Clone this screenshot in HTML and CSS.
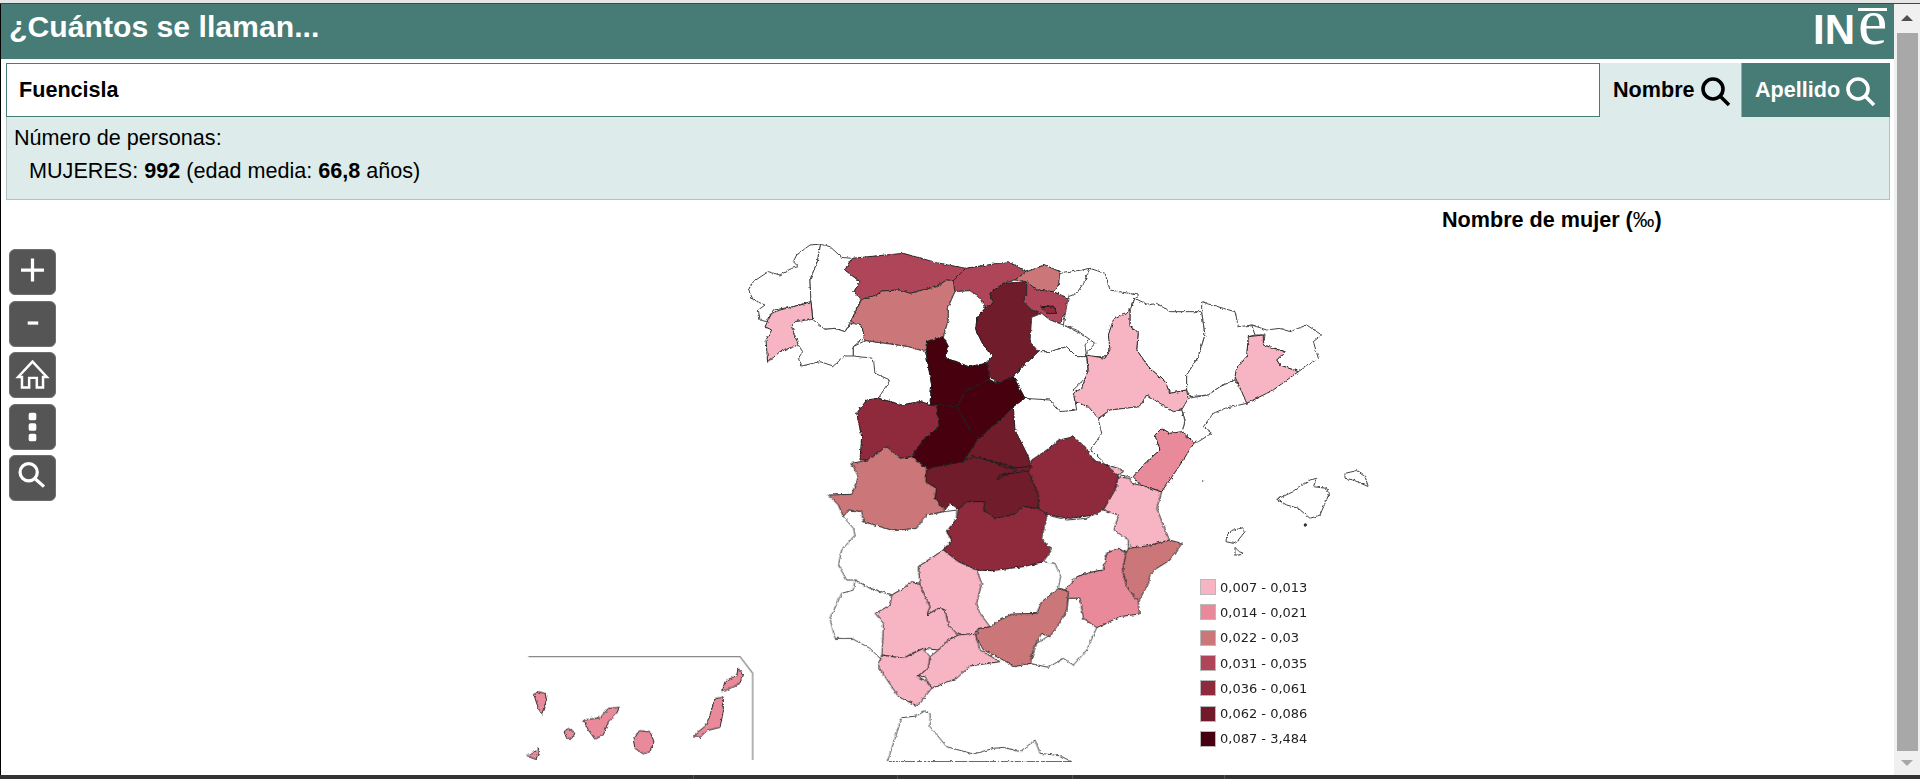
FILE: index.html
```html
<!DOCTYPE html>
<html lang="es">
<head>
<meta charset="utf-8">
<title>¿Cuántos se llaman...</title>
<link rel="stylesheet" href="styles.css">
</head>
<body>
<div class="top-strip"></div>
<div class="window">
  <main class="main">
    <header class="header">
      <h1 class="title">¿Cuántos se llaman...</h1>
      <div class="logo"><span class="logo-in">IN</span><span class="logo-e">e</span></div>
    </header>
    <div class="search">
      <input class="search-input" type="text" value="Fuencisla">
      <button class="tab tab-on">Nombre
        <svg class="tab-icon" viewBox="0 0 30 30"><circle cx="12" cy="12" r="10"/><line x1="19" y1="19" x2="28" y2="28"/></svg>
      </button>
      <button class="tab tab-off">Apellido
        <svg class="tab-icon" viewBox="0 0 30 30"><circle cx="12" cy="12" r="10"/><line x1="19" y1="19" x2="28" y2="28"/></svg>
      </button>
    </div>
    <section class="info">
      <p class="info-line">Número de personas:</p>
      <p class="info-line info-sub">MUJERES: <b>992</b> (edad media: <b>66,8</b> años)</p>
    </section>
    <section class="map-area">
      <svg class="map" viewBox="1 200 1893 575">
        <defs>
          <filter id="rough" x="0" y="0" width="100%" height="100%" filterUnits="objectBoundingBox">
            <feTurbulence type="fractalNoise" baseFrequency="0.28" numOctaves="2" seed="4" result="n"/>
            <feDisplacementMap in="SourceGraphic" in2="n" scale="3.2" xChannelSelector="R" yChannelSelector="G"/>
          </filter>
        </defs>
        <g filter="url(#rough)">
        <g transform="translate(730 230) scale(.33333)">
          <polygon class="w" points="55,180 70,155 115,125 150,135 185,115 205,110 190,95 200,75 240,45 272,42 262,95 240,150 243,215 190,230 130,240 110,275 90,270 85,240 105,225 70,210"/>
          <polygon class="w" points="272,42 300,50 335,82 365,85 345,120 390,155 372,185 392,210 362,275 345,305 315,295 285,298 245,280 248,262 243,215 240,150 262,95"/>
          <polygon class="c1" points="243,215 248,265 195,275 185,290 205,345 150,365 113,397 108,330 125,300 105,290 125,250 150,240 190,230"/>
          <polygon class="w" points="248,268 285,298 315,295 345,305 362,280 395,285 405,320 370,350 370,378 345,378 310,408 270,395 215,408 205,385 218,365 205,345 185,290 195,275"/>
          <polygon class="c4" points="365,85 520,70 620,98 707,115 670,152 650,150 620,170 540,190 510,180 455,183 440,195 395,208 372,185 390,155 345,120"/>
          <polygon class="c4" points="707,115 805,100 835,95 890,125 855,150 820,160 780,190 790,220 765,230 750,205 720,182 672,185 662,155 670,152"/>
          <polygon class="c3" points="395,208 440,195 455,183 510,180 540,190 620,170 650,150 670,152 675,185 655,230 655,270 640,320 590,335 585,365 535,350 405,332 395,285 362,275"/>
          <polygon class="w" points="675,185 720,182 750,205 765,235 740,265 738,300 760,345 790,378 770,395 745,410 715,410 680,395 645,385 655,350 640,320 655,270 655,230"/>
          <polygon class="c6" points="780,190 820,160 890,155 890,195 880,215 905,240 935,250 905,262 900,335 925,365 880,405 850,440 805,460 780,440 770,400 790,378 760,345 738,300 740,265 765,235 790,220"/>
          <polygon class="c3" points="855,150 890,125 945,105 990,125 985,170 970,185 920,180 890,155"/>
          <polygon class="w" points="990,125 1000,130 1080,115 1085,115 1060,170 1035,195 1015,205 970,185 985,170"/>
          <polygon class="c4" points="890,155 920,180 970,185 1015,205 1005,250 990,280 960,270 935,250 905,240 880,215 890,195"/>
          <polygon class="c5" points="935,230 970,228 980,250 950,250"/>
          <polygon class="w" points="905,262 935,250 960,270 1000,285 1080,325 1065,345 1070,380 1040,380 1010,350 960,365 930,370 900,335"/>
          <polygon class="w" points="405,332 535,350 585,365 590,380 605,465 600,525 570,515 515,525 445,505 480,450 435,430 430,385 370,378 370,350"/>
          <polygon class="c5" points="445,505 515,525 570,515 625,530 628,590 580,630 545,680 510,685 470,650 415,690 390,690 395,620 380,550 410,510"/>
          <polygon class="w" points="850,440 925,365 960,365 1010,350 1040,380 1070,380 1075,435 1030,480 1040,540 990,545 960,510 885,505"/>
          <polygon class="c7" points="590,335 640,320 655,350 645,385 680,395 715,410 770,400 780,450 710,480 680,530 640,530 620,525 600,525 605,465 590,380"/>
          <polygon class="c7" points="780,450 805,460 850,440 885,505 850,530 800,580 745,625 720,600 680,530 710,480"/>
          <polygon class="c6" points="850,530 855,600 895,680 905,710 830,715 790,695 730,680 700,695 745,625 800,580"/>
          <polygon class="c7" points="620,525 680,530 720,600 745,625 700,695 620,720 590,715 560,700 545,680 580,630 628,590"/>
        </g>
        <g transform="translate(1060 260) scale(.33333)">
          <polygon class="w" points="90,25 135,40 150,90 235,105 215,130 210,200 225,250 150,290 80,290 75,285 105,250 50,210 10,195 25,110 50,100 70,70"/>
          <polygon class="w" points="225,115 265,135 290,130 330,155 425,155 435,225 415,290 380,345 380,390 330,400 315,365 265,320 230,270 235,215 210,200 210,150"/>
          <polygon class="c1" points="210,150 210,200 235,215 230,270 265,320 315,365 330,400 380,390 385,420 365,450 340,455 300,430 260,405 240,440 150,450 115,475 85,440 45,425 40,400 65,385 85,330 80,285 135,295 150,270 145,225 160,180"/>
          <polygon class="w" points="425,125 490,145 525,155 535,200 580,195 585,225 565,230 560,290 530,325 525,360 480,380 445,405 390,410 380,390 380,345 415,290 435,225 425,155"/>
          <polygon class="w" points="575,195 620,210 660,205 690,215 740,195 785,225 760,245 775,295 715,335 660,315 650,300 675,275 610,255 615,225 585,225"/>
          <polygon class="c1" points="565,230 610,225 610,255 675,275 650,300 660,315 715,335 640,390 560,430 545,395 525,350 530,325 560,290"/>
          <polygon class="w" points="525,360 545,395 560,430 495,445 460,460 430,500 455,520 415,545 403,548 365,520 375,480 365,450 385,415 445,405 480,380"/>
          <polygon class="w" points="115,478 150,450 240,440 260,405 300,430 340,455 365,450 375,480 365,520 330,520 305,505 285,525 300,570 260,605 220,650 205,650 180,645 140,615 92,570 125,520"/>
          <polygon class="c2" points="305,505 330,520 365,515 403,548 350,630 305,695 275,685 240,675 220,650 260,605 300,570 285,525"/>
          <polygon class="w" points="650,718 700,695 750,660 770,655 760,680 800,685 808,700 780,765 750,775 715,745 680,735"/>
          <polygon class="w" points="855,640 890,632 915,650 925,680 880,660 855,655"/>
          <circle class="speck" cx="428" cy="663" r="2"/>
        </g>
        <g transform="translate(1200 460) scale(.33333)">
          <polygon class="w" points="80,225 95,212 130,203 135,215 115,240 100,250 78,245"/>
          <polygon class="w" points="105,262 118,275 130,280 120,285 105,285"/>
          <circle class="speck" cx="316" cy="195" r="5"/>
        </g>
        <g transform="translate(810 460) scale(.33333)">
          <polygon class="c1" points="890,15 925,25 940,35 925,45 895,35"/>
          <polygon class="c1" points="920,50 960,55 965,70 990,75 1055,95 1040,145 1078,240 1010,258 1000,272 965,262 912,210 925,165 880,150 885,115 920,80"/>
          <polygon class="c5" points="665,0 710,-30 750,-60 790,-70 825,-40 850,0 890,15 925,48 915,90 880,150 850,165 780,175 712,165 685,145 685,105 655,32"/>
          <polygon class="c3" points="125,10 175,0 230,-40 270,-5 305,-10 350,25 348,65 380,85 375,115 405,155 350,165 320,205 250,212 160,185 155,155 115,150 100,170 85,135 55,105 125,103 145,50"/>
          <polygon class="w" points="100,170 115,150 155,155 160,185 250,212 320,205 350,165 405,155 440,150 440,175 410,215 425,240 400,270 325,320 330,370 305,365 280,385 245,405 180,385 135,360 110,360 85,315 95,270 135,225 130,205"/>
          <polygon class="c6" points="350,25 460,5 490,-10 550,5 590,25 665,20 655,32 685,105 685,145 640,140 610,165 555,175 520,150 525,125 470,125 445,148 420,128 405,150 375,115 380,85 348,65"/>
          <polyline class="line" points="530,0 590,15 620,30 575,50 560,60 568,45 620,38 655,32"/>
          <polygon class="c5" points="445,148 470,125 525,125 520,150 555,175 610,165 640,140 685,145 712,165 695,235 725,270 700,305 640,320 600,325 545,332 500,330 445,305 400,270 425,240 410,215 440,175"/>
          <polygon class="w" points="712,165 770,180 830,175 880,150 925,165 912,210 955,240 955,280 925,265 890,280 880,330 850,335 800,350 765,390 745,382 752,350 735,310 700,305 725,270 695,235"/>
          <polygon class="c2" points="765,390 800,350 850,335 880,330 890,280 925,265 948,280 938,330 950,380 985,425 988,462 930,470 860,503 820,475 810,415 775,415"/>
          <polygon class="c3" points="955,265 1010,258 1078,240 1116,250 1080,300 1040,325 1020,345 1015,370 985,425 950,380 938,330 948,280"/>
          <polygon class="w" points="775,415 810,415 820,475 860,503 830,570 790,615 760,595 715,622 660,610 680,550 720,525 770,455"/>
          <polygon class="c3" points="745,385 775,395 770,455 720,530 695,520 672,560 660,610 615,620 570,595 520,570 497,530 505,505 540,500 570,480 605,462 680,460 695,425"/>
          <polygon class="c1" points="325,320 400,270 445,305 500,330 515,370 500,430 510,460 540,500 505,505 495,520 450,530 415,495 405,450 385,445 350,465 360,440 330,375"/>
          <polygon class="c1" points="245,405 280,385 305,365 330,375 360,440 350,465 385,445 405,450 415,495 445,525 415,540 385,570 340,565 305,580 280,595 215,585 220,490 195,460 240,435"/>
          <polygon class="w" points="135,360 180,385 245,405 240,435 195,460 220,490 215,600 180,565 125,535 75,535 60,475 95,400 130,390"/>
          <polygon class="c1" points="215,585 280,595 340,565 360,590 355,625 320,650 345,660 365,685 345,710 320,737 265,710 205,620"/>
          <polygon class="c1" points="360,590 385,570 415,540 445,525 495,520 510,570 570,605 480,618 440,655 365,685 345,650 320,650 355,625"/>
          <polygon class="w" points="232,905 275,773 320,768 345,752 360,760 360,800 410,860 490,882 550,865 580,862 630,875 675,840 690,880 750,887 785,905"/>
        </g>
        <g transform="translate(510 640) scale(.33333)">
          <polygon class="c2" points="72,165 85,155 105,160 110,180 95,222 85,205"/>
          <polygon class="c2" points="50,345 70,340 85,325 88,335 78,358 55,350"/>
          <polygon class="c2" points="162,275 175,265 195,280 185,295 170,295"/>
          <polygon class="c2" points="220,240 270,233 295,205 328,202 320,220 295,245 280,285 255,298 235,270"/>
          <polygon class="c2" points="388,272 420,275 432,305 420,335 400,342 375,325 370,300"/>
          <polygon class="c2" points="615,175 640,172 640,215 630,262 590,272 570,292 550,287 590,255 600,225"/>
          <polygon class="c2" points="645,125 680,105 685,85 698,100 690,130 650,150 635,155"/>
        </g>
        </g>
        <polyline class="canary-box" transform="translate(510 640) scale(.33333)" points="55,50 690,50 728,100 728,360"/>
      </svg>
      <h2 class="map-title">Nombre de mujer (<span class="unit">‰</span>)</h2>
      <div class="controls">
        <button class="ctl"><svg viewBox="0 0 46 46"><path class="ic" d="M11 21H35M23 9V33"/></svg></button>
        <button class="ctl"><svg viewBox="0 0 46 46"><path class="ic" d="M18 22H29"/></svg></button>
        <button class="ctl"><svg viewBox="0 0 46 46"><path class="ic ic-thin" d="M12 36V25H8L23 9L38 25H34V36H27.5V26H19.5V36Z"/></svg></button>
        <button class="ctl"><svg viewBox="0 0 46 46"><rect class="dot" x="19" y="8" width="8" height="8" rx="2"/><rect class="dot" x="19" y="19" width="8" height="8" rx="2"/><rect class="dot" x="19" y="30" width="8" height="8" rx="2"/></svg></button>
        <button class="ctl"><svg viewBox="0 0 46 46"><circle class="ic" cx="19" cy="17" r="9"/><path class="ic" d="M26 24L35 32"/></svg></button>
      </div>
      <ul class="legend">
        <li class="leg-row"><span class="sw s1"></span>0,007 - 0,013</li>
        <li class="leg-row"><span class="sw s2"></span>0,014 - 0,021</li>
        <li class="leg-row"><span class="sw s3"></span>0,022 - 0,03</li>
        <li class="leg-row"><span class="sw s4"></span>0,031 - 0,035</li>
        <li class="leg-row"><span class="sw s5"></span>0,036 - 0,061</li>
        <li class="leg-row"><span class="sw s6"></span>0,062 - 0,086</li>
        <li class="leg-row"><span class="sw s7"></span>0,087 - 3,484</li>
      </ul>
    </section>
  </main>
  <aside class="scrollbar">
    <span class="arrow-up"></span>
    <span class="thumb"></span>
    <span class="arrow-down"></span>
  </aside>
</div>
<div class="bottom-bar"><span class="cell c-a"></span><span class="cell c-b"></span><span class="cell c-c"></span><span class="cell c-d"></span></div>
</body>
</html>
```
FILE: styles.css
```css
* { box-sizing: border-box; }
html, body { margin: 0; height: 100%; overflow: hidden; }
body {
  display: flex;
  flex-direction: column;
  height: 779px;
  background: #fff;
  color: #000;
  font-family: "Liberation Sans", Arial, sans-serif;
}
.top-strip { height: 4px; background: #e6e6e6; border-bottom: 1px solid #444; flex: none; }
.window { flex: 1; display: flex; min-height: 0; }
.bottom-bar { height: 4px; background: #333; flex: none; display: flex; }
.cell { border-right: 1px solid #555; flex: none; }
.c-a { width: 694px; }
.c-b { width: 204px; }
.c-c { width: 175px; }
.c-d { width: 152px; }

.main { flex: 1; min-width: 0; display: flex; flex-direction: column; border-left: 1px solid #000; }
.header {
  height: 55px;
  flex: none;
  background: #467c75;
  display: flex;
  justify-content: space-between;
  padding: 0 7px 0 8px;
}
.title { margin: 0; font-size: 30.2px; font-weight: bold; color: #fff; line-height: 46px; }
.logo { color: #fff; display: flex; align-items: flex-start; gap: 3px; }
.logo-in {
  display: block;
  font-family: "Liberation Sans", sans-serif;
  font-weight: bold;
  font-size: 42px;
  line-height: 42px;
  margin-top: 5px;
}
.logo-e {
  display: block;
  width: 29px;
  height: 44px;
  margin-top: -2px;
  background: linear-gradient(#fff, #fff) no-repeat 0 6px / 100% 3px;
  font-family: "Liberation Serif", serif;
  font-size: 66px;
  line-height: 40px;
  text-align: center;
}

.search { flex: none; display: flex; height: 54px; margin: 4px 4px 0 5px; }
.search-input {
  flex: 1;
  min-width: 0;
  border: 1px solid #467c75;
  background: #fff;
  padding: 0 12px;
  font: bold 21.6px "Liberation Sans", Arial, sans-serif;
  color: #000;
  outline: none;
}
.tab {
  border: 0;
  display: flex;
  align-items: center;
  gap: 6px;
  font: bold 21.6px "Liberation Sans", Arial, sans-serif;
  padding: 0 0 0 13px;
  white-space: nowrap;
}
.tab-on { width: 142px; background: #ddecea; color: #000; border-right: 1px solid #8fb0ab; }
.tab-off { width: 148px; background: #467c75; color: #fff; }
.tab-icon { width: 30px; height: 30px; fill: none; stroke: currentColor; stroke-width: 3.6; margin-top: 4px; flex: none; }

.info {
  flex: none;
  height: 83px;
  margin: 0 4px 0 5px;
  background: #ddecea;
  border: 1px solid #b1c2bf;
  border-top: 0;
  padding: 4px 0 0 7px;
  font-size: 21.6px;
}
.info-line { margin: 0; line-height: 33px; }
.info-sub { padding-left: 15px; }

.map-area { flex: 1; min-height: 0; position: relative; }
.map { position: absolute; left: 0; top: 0; width: 1893px; height: 575px; display: block; }
.map-title { position: relative; margin: 0; padding: 8px 0 0 1441px; font-size: 21.6px; font-weight: bold; line-height: 24px; }
.unit { font-weight: normal; }

.w, .c1, .c2, .c3, .c4, .c5, .c6, .c7 { stroke-width: 1; vector-effect: non-scaling-stroke; stroke-linejoin: round; }
.w { fill: #fff; stroke: #444; }
.c1 { fill: #f7b4c3; stroke: #2b2b2b; }
.c2 { fill: #e98a9b; stroke: #2b2b2b; }
.c3 { fill: #cb7779; stroke: #2b2b2b; }
.c4 { fill: #ae4559; stroke: #2b2b2b; }
.c5 { fill: #8f2a3c; stroke: #1e1e1e; }
.c6 { fill: #701a2b; stroke: #1e1e1e; }
.c7 { fill: #47000f; stroke: #1e1e1e; }
.speck { fill: #333; }
.line { fill: none; stroke: #1e1e1e; stroke-width: 1; vector-effect: non-scaling-stroke; }
.canary-box { fill: none; stroke: #8a8a8a; stroke-width: 1.3; vector-effect: non-scaling-stroke; }

.controls { position: absolute; left: 8px; top: 49px; display: flex; flex-direction: column; gap: 5.5px; }
.ctl {
  width: 47px;
  height: 46px;
  padding: 0;
  background: #555;
  border: 1px solid #6e6e6e;
  border-radius: 6px;
  display: block;
}
.ctl svg { display: block; width: 100%; height: 100%; }
.ic { fill: none; stroke: #fff; stroke-width: 3.4; }
.ic-thin { stroke-width: 2.6; }
.dot { fill: #fff; }

.legend { position: absolute; left: 1199px; top: 374.5px; margin: 0; padding: 0; list-style: none; }
.leg-row {
  display: flex;
  align-items: center;
  gap: 4px;
  height: 25.3px;
  font: 13px "DejaVu Sans", Verdana, sans-serif;
  color: #222;
}
.sw { width: 16px; height: 16px; border: 1px solid #b9b9b9; flex: none; }
.s1 { background: #f7b4c3; }
.s2 { background: #e98a9b; }
.s3 { background: #cb7779; }
.s4 { background: #ae4559; }
.s5 { background: #8f2a3c; }
.s6 { background: #701a2b; }
.s7 { background: #47000f; }

.scrollbar { width: 26px; flex: none; background: #f0f0f0; display: flex; flex-direction: column; align-items: center; }
.arrow-up {
  margin-top: 11px;
  border-left: 6px solid transparent;
  border-right: 6px solid transparent;
  border-bottom: 6px solid #505050;
  flex: none;
}
.thumb { flex: 1; width: 21px; margin: 12px 0 0 0; background: #a8a8a8; }
.arrow-down {
  margin: 9px 0 9px;
  border-left: 6px solid transparent;
  border-right: 6px solid transparent;
  border-top: 6px solid #a8a8a8;
  flex: none;
}
```
